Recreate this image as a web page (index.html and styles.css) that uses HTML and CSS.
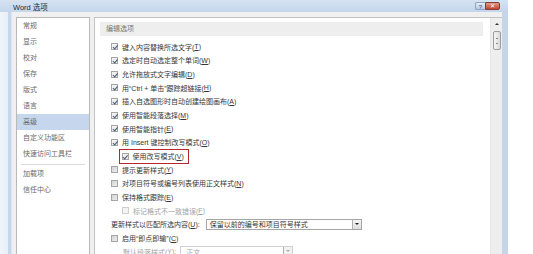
FILE: index.html
```html
<!DOCTYPE html>
<html lang="zh-CN">
<head>
    <meta charset="UTF-8">
    <title>Word 选项</title>
    <link rel="stylesheet" href="styles.css">
</head>
<body>

<div class="window">
    <!--TITTELLINJE-->
    <div class="titlebar">
        <span class="title">Word 选项</span>
        <div class="caption-btns">
            <span class="btn-help">?</span>
            <span class="btn-close">✕</span>
        </div>
    </div>

    <div class="frame">
        <div class="frame-left"></div>

        <div class="client">
            <!--VENSTRE MENY-->
            <ul class="nav">
                <li>常规</li>
                <li>显示</li>
                <li>校对</li>
                <li>保存</li>
                <li>版式</li>
                <li>语言</li>
                <li class="active">高级</li>
                <li>自定义功能区</li>
                <li>快速访问工具栏</li>
                <li class="sep"></li>
                <li>加载项</li>
                <li>信任中心</li>
            </ul>

            <!--INNHOLD-->
            <div class="content">
                <div class="options">
                    <div class="section">编辑选项</div>

                    <div class="rows">
                        <div class="row"><span class="cb on"></span>键入内容替换所选文字(<u>T</u>)</div>
                        <div class="row"><span class="cb on"></span>选定时自动选定整个单词(<u>W</u>)</div>
                        <div class="row"><span class="cb on"></span>允许拖放式文字编辑(<u>D</u>)</div>
                        <div class="row"><span class="cb on"></span>用“Ctrl + 单击”跟踪超链接(<u>H</u>)</div>
                        <div class="row"><span class="cb on"></span>插入自选图形时自动创建绘图画布(<u>A</u>)</div>
                        <div class="row"><span class="cb on"></span>使用智能段落选择(<u>M</u>)</div>
                        <div class="row"><span class="cb on"></span>使用智能指针(<u>E</u>)</div>
                        <div class="row"><span class="cb on"></span>用 Insert 键控制改写模式(<u>O</u>)</div>
                        <div class="row">
                            <span class="mark"><span class="cb on"></span>使用改写模式(<u>V</u>)</span>
                        </div>
                        <div class="row"><span class="cb"></span>提示更新样式(<u>Y</u>)</div>
                        <div class="row"><span class="cb"></span>对项目符号或编号列表使用正文样式(<u>N</u>)</div>
                        <div class="row"><span class="cb"></span>保持格式跟踪(<u>E</u>)</div>
                        <div class="row sub off"><span class="cb"></span>标记格式不一致错误(<u>F</u>)</div>
                        <div class="row">
                            更新样式以匹配所选内容(<u>U</u>):
                            <span class="select wide">保留以前的编号和项目符号样式<span class="arrow"></span></span>
                        </div>
                        <div class="row"><span class="cb"></span>启用“即点即输”(<u>C</u>)</div>
                        <div class="row sub2 off">
                            默认段落样式(<u>Y</u>):
                            <span class="select narrow">正文<span class="arrow"></span></span>
                        </div>
                    </div>
                </div>

                <!--RULLEFELT-->
                <div class="scrollbar">
                    <span class="up"></span>
                    <span class="thumb"></span>
                </div>
            </div>
        </div>

        <div class="frame-right"></div>
    </div>
</div>

</body>
</html>
```

FILE: styles.css
```css
   body {
       margin: 0;
       background-color: white;
       font-family: "Liberation Sans", "Noto Sans CJK SC", sans-serif;
       font-size: 7px;
       color: #363636;
   }
   /*VINDU OG RAMME*/
   .window {
       width: 508px;
       height: 254px;
       display: flex;
       flex-direction: column;
       overflow: hidden;
   }
   .titlebar {
       height: 12px;
       flex-shrink: 0;
       display: flex;
       align-items: center;
       justify-content: space-between;
       padding: 0 8px 0 13px;
       background: linear-gradient(to bottom, #d6e3f3, #c4d5eb);
   }
   .title {
       color: #2b2b2b;
       font-size: 7.5px;
   }
   .caption-btns {
       display: flex;
       height: 8px;
       margin-top: -1px;
   }
   .btn-help {
       width: 10px;
       height: 8px;
       border: 1px solid #8fa6c4;
       border-right: none;
       border-radius: 2px 0 0 2px;
       background: linear-gradient(to bottom, #e4edf8, #b9cbe3);
       color: #34506f;
       font-size: 6px;
       line-height: 8px;
       text-align: center;
       box-sizing: border-box;
   }
   .btn-close {
       width: 15px;
       height: 8px;
       border: 1px solid #8d3b33;
       border-radius: 0 2px 2px 0;
       background: linear-gradient(to bottom, #e29a8c, #c2432f);
       color: white;
       font-size: 6px;
       line-height: 6px;
       text-align: center;
       box-sizing: border-box;
   }
   .frame {
       flex: 1;
       display: flex;
       min-height: 0;
   }
   .frame-left {
       width: 12px;
       flex-shrink: 0;
       background: linear-gradient(to right, #f1f5fa 0, #e6eef8 8px, #c6d6ec 8px, #c6d6ec 11px, #dfe6ef 11px);
   }
   .frame-right {
       width: 6px;
       flex-shrink: 0;
       background: #c4d5ec;
   }
   .client {
       flex: 1;
       display: flex;
       gap: 4px;
       padding: 5px 0 0 4px;
       background-color: #f0f0f0;
       min-width: 0;
   }
   /*MENY*/
   .nav {
       list-style-type: none;
       margin: 0;
       padding: 0;
       width: 74px;
       box-sizing: border-box;
       border: 1px solid #b9b9b9;
       border-bottom: none;
       background-color: white;
   }
   .nav li {
       height: 16px;
       line-height: 16px;
       padding-left: 6px;
       color: #6a6a6a;
   }
   .nav li.active {
       background-color: #c5d6ed;
   }
   .nav li.sep {
       height: 1px;
       margin: 2px 4px 1px;
       padding: 0;
       background-color: #dadada;
   }
   /*INNHOLD*/
   .content {
       flex: 1;
       display: flex;
       border: 1px solid #c3c3c3;
       border-bottom: none;
       border-right: none;
       background-color: white;
       min-width: 0;
   }
   .options {
       flex: 1;
       padding: 4px 7px 0 5px;
   }
   .section {
       height: 14px;
       line-height: 14px;
       padding-left: 6px;
       background-color: #eeeeee;
       color: #777;
   }
   .rows {
       margin-top: 4px;
       padding-left: 11px;
       display: grid;
       grid-auto-rows: 13.67px;
   }
   .row {
       display: flex;
       align-items: center;
       white-space: nowrap;
   }
   .row u {
       text-decoration-thickness: 1px;
       text-underline-offset: 1px;
   }
   .cb {
       width: 7px;
       height: 7px;
       margin-right: 4px;
       box-sizing: border-box;
       border: 1px solid #a6a6a6;
       background: linear-gradient(to bottom right, #d4d4d4, #ececec);
       flex-shrink: 0;
       position: relative;
   }
   .cb.on {
       background: linear-gradient(to bottom right, #f6f6f6, #e6e6e6);
   }
   .cb.on::after {
       content: "";
       position: absolute;
       left: 1.5px;
       top: 0;
       width: 1.5px;
       height: 3.5px;
       border: solid #4b5b78;
       border-width: 0 1px 1px 0;
       transform: rotate(40deg);
   }
   .sub {
       padding-left: 11px;
   }
   .sub2 {
       padding-left: 12px;
   }
   .off {
       color: #a3a3a3;
   }
   .off .cb {
       border-color: #cfcfcf;
       background: #f4f4f4;
   }
   /*RØD MARKERING*/
   .mark {
       display: flex;
       align-items: center;
       height: 15px;
       margin-left: 8px;
       padding: 0 4px 0 1.5px;
       border: 1.5px solid #b8272c;
       box-sizing: border-box;
   }
   /*NEDTREKKSLISTER*/
   .select {
       display: flex;
       align-items: center;
       height: 11px;
       margin-left: 6px;
       padding-left: 3px;
       box-sizing: border-box;
       border: 1px solid #a5a5a5;
       background-color: white;
   }
   .select.wide {
       width: 156px;
   }
   .select.narrow {
       width: 113px;
       margin-left: 4px;
       padding-left: 5px;
       border-color: #d0d0d0;
   }
   .arrow {
       margin-left: auto;
       width: 9px;
       height: 9px;
       box-sizing: border-box;
       border-left: 1px solid #b0b0b0;
       background: linear-gradient(to bottom, #f5f5f5, #dedede);
       position: relative;
   }
   .arrow::after {
       content: "";
       position: absolute;
       left: 2px;
       top: 3px;
       border-left: 2px solid transparent;
       border-right: 2px solid transparent;
       border-top: 2.5px solid #222;
   }
   .narrow .arrow {
       background: #f2f2f2;
   }
   .narrow .arrow::after {
       border-top-color: #aaa;
   }
   /*RULLEFELT*/
   .scrollbar {
       width: 11px;
       flex-shrink: 0;
       display: flex;
       flex-direction: column;
       align-items: center;
       border-left: 1px solid #e6e6e6;
       background-color: #eeeeee;
   }
   .up {
       width: 0;
       height: 0;
       margin-top: 5px;
       border-left: 2px solid transparent;
       border-right: 2px solid transparent;
       border-bottom: 2.5px solid #333;
   }
   .thumb {
       width: 8px;
       height: 19px;
       margin-top: 6px;
       box-sizing: border-box;
       border: 1px solid #9c9c9c;
       border-radius: 2px;
       background: linear-gradient(to right, #f6f6f6, #d9d9d9);
       position: relative;
   }
   .thumb::after {
       content: "";
       position: absolute;
       left: 2px;
       top: 6px;
       width: 2px;
       height: 4px;
       border-top: 1px solid #888;
       border-bottom: 1px solid #888;
   }
```
